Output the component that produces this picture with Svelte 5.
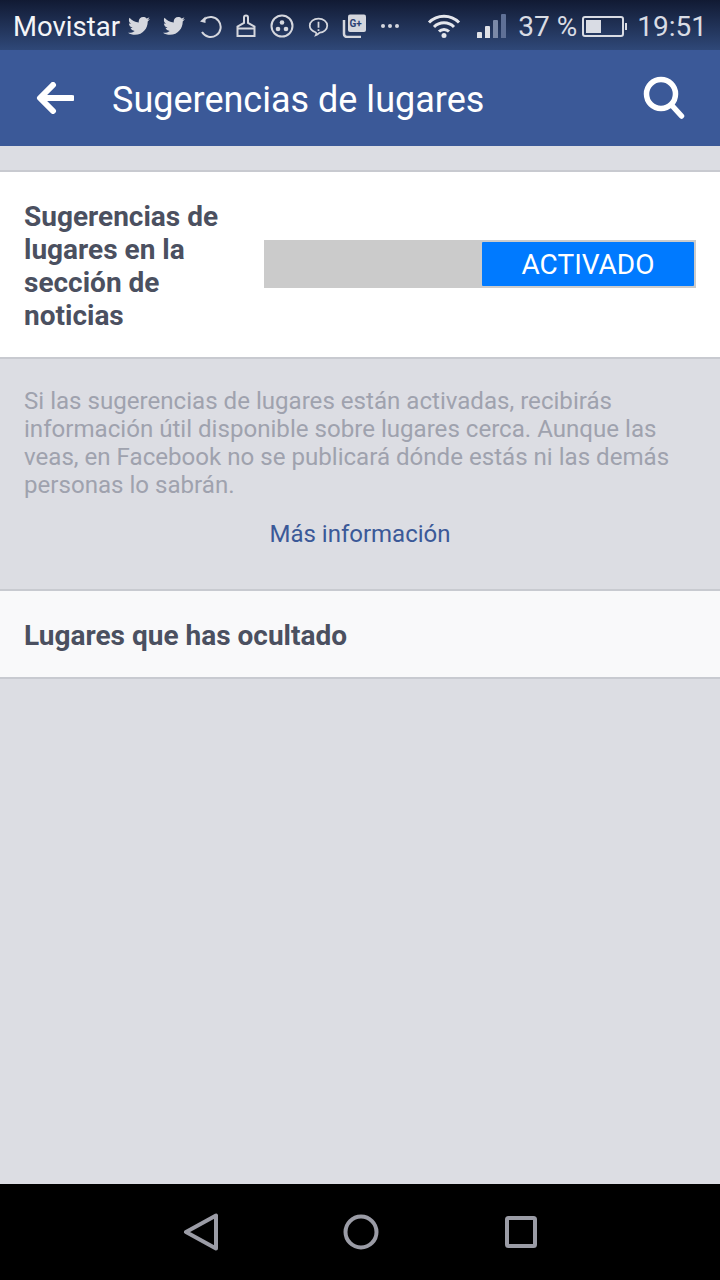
<script>
	const notice = [
		'Si las sugerencias de lugares están activadas, recibirás',
		'información útil disponible sobre lugares cerca. Aunque las',
		'veas, en Facebook no se publicará dónde estás ni las demás',
		'personas lo sabrán.'
	];
	const bird = 'M23 5.1c-.8.4-1.7.6-2.6.7.9-.6 1.6-1.4 2-2.5-.9.5-1.9.9-2.9 1.1C18.7 3.5 17.5 3 16.2 3c-2.5 0-4.5 2-4.5 4.5 0 .4 0 .7.1 1C8 8.3 4.7 6.5 2.5 3.8c-.4.7-.6 1.4-.6 2.3 0 1.6.8 2.9 2 3.7-.7 0-1.4-.2-2-.6v.1c0 2.2 1.5 4 3.6 4.4-.4.1-.8.2-1.2.2-.3 0-.6 0-.8-.1.6 1.8 2.2 3.1 4.2 3.1-1.5 1.2-3.5 1.9-5.6 1.9-.4 0-.7 0-1.1-.1C3 20 5.4 20.8 7.9 20.8c8.3 0 12.8-6.9 12.8-12.8v-.6c.9-.6 1.7-1.4 2.3-2.3z';
</script>

<div class="screen">
	<div class="status">
		<span class="carrier">Movistar</span>
		<div class="notifs">
			<svg class="ic tw" viewBox="0 0 24 24"><path d={bird} /></svg>
			<svg class="ic" viewBox="0 0 24 24"><path d={bird} /></svg>
			<svg class="ic" viewBox="0 0 24 24"><path class="ln" d="M6 5.5A10 10 0 1 1 4 18" /><path d="M2 7.5 7.5 2.5v6.500z" /></svg>
			<svg class="ic" viewBox="0 0 24 24"><path class="ln" d="M10 9V3.500a2 2 0 0 1 4 0V9l6.500 3.500V22H3.500v-9.500z M3.500 14.500h17" /></svg>
			<svg class="ic" viewBox="0 0 24 24"><circle class="ln" cx="12" cy="12" r="10.500" /><circle cx="12" cy="8.500" r="2.300" /><circle cx="8" cy="15" r="2.300" /><circle cx="16" cy="15" r="2.300" /></svg>
			<svg class="ic bubble" viewBox="0 0 24 24"><path class="ln" d="M12 3c5.500 0 10 3.500 10 8s-4.500 8-8.500 8c-1 0-1.500 2-4.500 3 1-2 .5-3-.5-3.500C5 17 2 14.500 2 11c0-4.500 4.500-8 10-8z" /><path d="M11 6.500h2v7h-2zM11 15h2v2h-2z" /></svg>
			<svg class="ic gplus" viewBox="0 0 24 24">
				<rect x="6" y="0.500" width="18" height="17.500" rx="2" />
				<path class="ln" d="M2 6v14a3 3 0 0 0 3 3h14" />
				<text x="7.500" y="13" class="g">G+</text>
			</svg>
			<span class="dots">
				<i></i><i></i><i></i>
			</span>
		</div>
		<div class="sys">
			<svg class="wifi" viewBox="0 0 34 24">
				<path class="arc" d="M2 8.500a21 21 0 0 1 30 0" />
				<path class="arc" d="M7 13a14 14 0 0 1 20 0" />
				<path class="arc" d="M12 17.500a7 7 0 0 1 10 0" />
				<circle cx="17" cy="21.500" r="2.500" />
			</svg>
			<div class="signal">
				<i class="b1"></i><i class="b2"></i><i class="b3"></i><i class="b4"></i>
			</div>
			<span class="pct">37 %</span>
			<div class="battery"><div class="level"></div></div>
			<span class="clock">19:51</span>
		</div>
	</div>

	<header class="bar">
		<svg class="back" viewBox="0 0 38 32"><path d="M17 3 4 16l13 13M5 16h31" /></svg>
		<h1>Sugerencias de lugares</h1>
		<svg class="search" viewBox="0 0 42 44"><circle cx="18" cy="18" r="14.500" /><path d="m28.500 29 10 11" /></svg>
	</header>

	<main>
		<section class="card toggle-row">
			<div class="label">Sugerencias de lugares en la sección de noticias</div>
			<div class="toggle"><div class="on">ACTIVADO</div></div>
		</section>

		<div class="notice">
			<p>
				{#each notice as line}
					<span>{line}</span>
				{/each}
			</p>
			<div class="more">Más información</div>
		</div>

		<section class="card hidden-row">Lugares que has ocultado</section>
	</main>

	<nav>
		<svg viewBox="0 0 36 38" class="nav-back"><path d="M33 2.500v33L3 19z" /></svg>
		<svg viewBox="0 0 36 36" class="nav-home"><circle cx="18" cy="18" r="15.500" /></svg>
		<svg viewBox="0 0 32 32" class="nav-recent"><rect x="2" y="2" width="28" height="28" rx="1.500" /></svg>
	</nav>
</div>

<style>
	:global(body) {
		margin: 0;
	}
	.screen {
		width: 720px;
		height: 1280px;
		display: flex;
		flex-direction: column;
		overflow: hidden;
		background: #dcdde3;
		font-family: Roboto, 'Liberation Sans', sans-serif;
	}

	/* status bar */
	.status {
		height: 50px;
		flex: none;
		display: flex;
		align-items: center;
		padding: 2px 13px 0;
		box-sizing: border-box;
		background: linear-gradient(#111a33, #2f4878);
		color: #d9dce4;
	}
	.carrier {
		font-size: 27.500px;
		color: #f4f5f8;
		margin-right: 7px;
	}
	.notifs {
		display: flex;
		align-items: center;
		gap: 12px;
	}
	.notifs svg {
		fill: #d5d7de;
		flex: none;
	}
	.ic {
		width: 24px;
		height: 24px;
	}
	.tw {
		margin-right: -1px;
	}
	.bubble {
		width: 21px;
		height: 21px;
		margin: 0 1px 0 2px;
	}
	.ln {
		fill: none;
		stroke: #d5d7de;
		stroke-width: 2;
	}
	.gplus .ln {
		stroke-width: 2.500;
	}
	.g {
		font-size: 10px;
		font-weight: 700;
		fill: #2c4273;
	}
	.dots {
		display: flex;
		gap: 3px;
		margin-left: 3px;
	}
	.dots i {
		width: 4px;
		height: 4px;
		border-radius: 50%;
		background: #d5d7de;
	}
	.sys {
		margin-left: auto;
		display: flex;
		align-items: center;
	}
	.wifi {
		width: 34px;
		height: 24px;
		fill: #e4e6ec;
		margin-right: 16px;
	}
	.arc {
		fill: none;
		stroke: #e4e6ec;
		stroke-width: 3;
	}
	.signal {
		display: flex;
		align-items: flex-end;
		gap: 3px;
		height: 24px;
		margin-right: 12px;
	}
	.signal i {
		width: 5px;
		border-radius: 1px 1px 0 0;
	}
	.b1 {
		height: 6px;
		background: #e0e2e8;
	}
	.b2 {
		height: 12px;
		background: #e0e2e8;
	}
	.b3 {
		height: 18px;
		background: #7b89a8;
	}
	.b4 {
		height: 24px;
		background: #5f7096;
	}
	.pct {
		font-size: 28px;
		margin-right: 5px;
	}
	.battery {
		width: 42px;
		height: 21px;
		border: 2px solid #d9dce4;
		border-radius: 3px;
		padding: 2px;
		box-sizing: border-box;
		position: relative;
		margin-right: 13px;
	}
	.battery::after {
		content: '';
		position: absolute;
		right: -5px;
		top: 5px;
		width: 2px;
		height: 7px;
		background: #d9dce4;
	}
	.level {
		width: 15px;
		height: 100%;
		background: #d9dce4;
	}
	.clock {
		font-size: 28px;
	}

	/* title bar */
	.bar {
		height: 96px;
		flex: none;
		display: flex;
		align-items: center;
		background: #3b5998;
		color: #fff;
		padding: 0 35px 0 36px;
		box-sizing: border-box;
	}
	h1 {
		margin: 3px 0 0 38px;
		font-size: 36px;
		font-weight: 400;
		flex: 1;
	}
	.back {
		width: 38px;
		height: 32px;
		fill: none;
		stroke: #fff;
		stroke-width: 6;
		stroke-linecap: round;
		stroke-linejoin: round;
	}
	.search {
		width: 42px;
		height: 44px;
		fill: none;
		stroke: #fff;
		stroke-width: 5.500;
		stroke-linecap: round;
	}

	main {
		flex: 1;
		padding-top: 24px;
		min-height: 0;
	}
	.card {
		background: #fff;
		border-top: 2px solid #c8cad0;
		border-bottom: 2px solid #c8cad0;
		box-sizing: border-box;
	}
	.toggle-row {
		height: 189px;
		display: flex;
		align-items: center;
		justify-content: space-between;
		padding: 0 24px;
	}
	.label {
		width: 210px;
		margin-top: 2px;
		font-size: 28px;
		line-height: 33px;
		font-weight: 700;
		color: #4b5060;
	}
	.toggle {
		width: 432px;
		height: 48px;
		margin-bottom: 2px;
		background: #cbcbcb;
		display: flex;
		justify-content: flex-end;
		padding: 2px;
		box-sizing: border-box;
	}
	.on {
		width: 212px;
		padding-top: 2px;
		background: #007aff;
		color: #fff;
		font-size: 28px;
		display: flex;
		align-items: center;
		justify-content: center;
		border-radius: 1px;
	}
	.notice {
		height: 230px;
		padding: 28px 24px 0;
		box-sizing: border-box;
		color: #9fa2ae;
		font-size: 24.100px;
		line-height: 28px;
	}
	.notice p {
		margin: 0;
	}
	.notice span {
		display: block;
		white-space: nowrap;
	}
	.more {
		text-align: center;
		color: #3b5998;
		font-size: 24px;
		margin-top: 21px;
	}
	.hidden-row {
		height: 90px;
		padding: 2px 24px 0;
		background: #f9f9fa;
		display: flex;
		align-items: center;
		font-size: 28px;
		font-weight: 700;
		color: #4b5060;
	}

	nav {
		height: 96px;
		flex: none;
		background: #000;
		display: flex;
		align-items: center;
		justify-content: center;
		gap: 125px;
	}
	nav svg {
		fill: none;
		stroke: #9b9ca6;
		stroke-width: 4;
		stroke-linejoin: round;
	}
	.nav-back {
		width: 36px;
		height: 38px;
	}
	.nav-home {
		width: 36px;
		height: 36px;
		margin: 0 1px 0 -1px;
	}
	.nav-recent {
		width: 32px;
		height: 32px;
	}
</style>
